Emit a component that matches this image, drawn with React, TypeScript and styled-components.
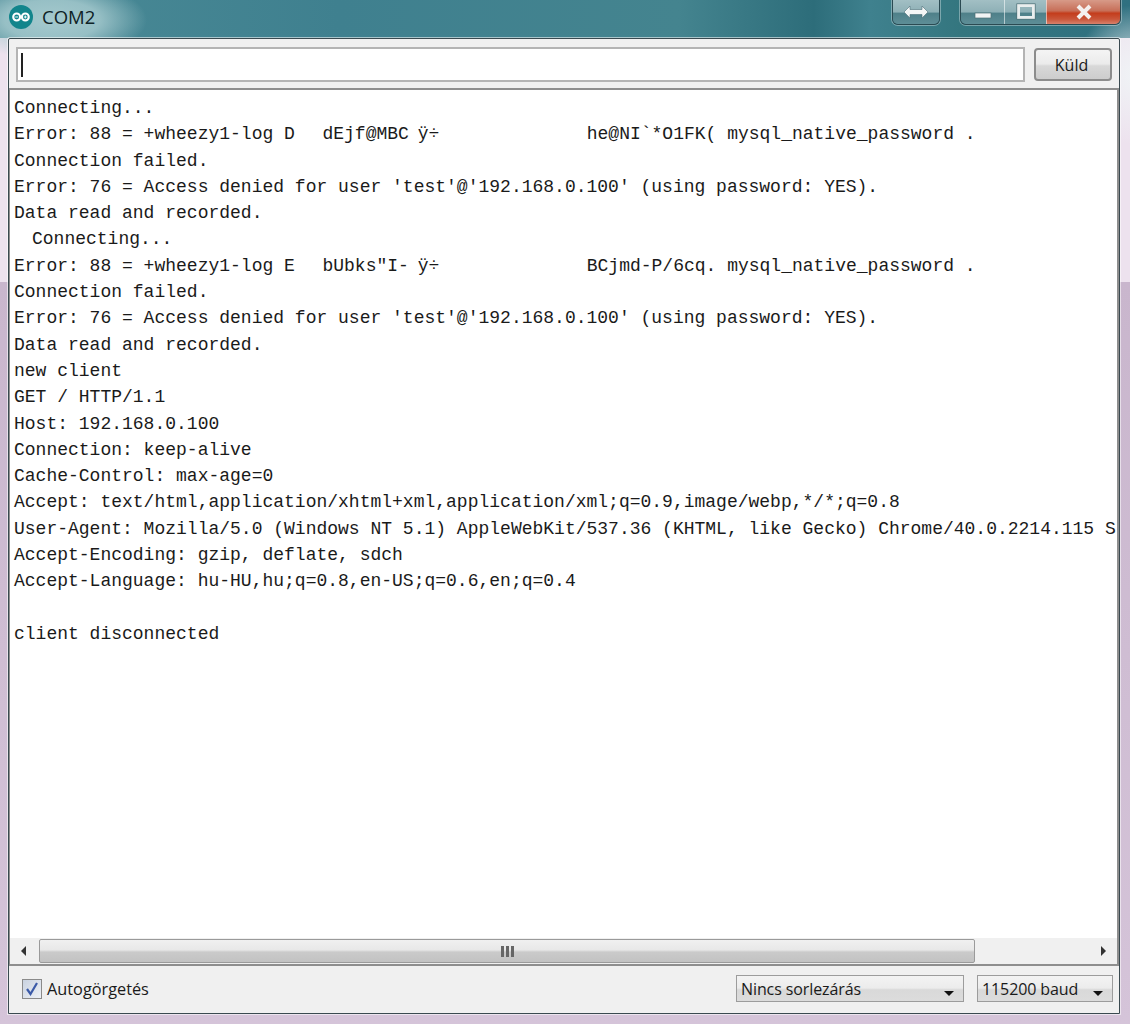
import React from "react";
import styled, { createGlobalStyle } from "styled-components";

const Global = createGlobalStyle`
  html, body { margin: 0; padding: 0; height: 100%; }
  body { width: 1130px; height: 1024px; overflow: hidden; }
  #root { width: 1130px; height: 1024px; }
`;

const Frame = styled.div`
  position: relative;
  width: 1130px;
  height: 1024px;
  box-sizing: border-box;
  display: flex;
  flex-direction: column;
  overflow: hidden;
  background:
    radial-gradient(ellipse 95px 40px at 52px 20px, rgba(170, 205, 209, 0.95) 0, rgba(170, 205, 209, 0.8) 50%, rgba(170, 205, 209, 0) 100%),
    radial-gradient(ellipse 60px 70px at 1135px 75px, rgba(240, 244, 246, 0.95), rgba(240, 244, 246, 0) 100%),
    linear-gradient(90deg, #4a8a96 0, #3f808f 30%, #44848f 60%, #2d6d7a 72%, #3f818e 77%, #34767f 85%, #2f7080 100%) top / 100% 38px no-repeat,
    linear-gradient(180deg, #ede2ee 0, #ede2ee 282px, #c9b6cd 282px, #d5c4d9 100%);
`;

const TitleBar = styled.div`
  height: 38px;
  flex: none;
  display: flex;
  align-items: flex-start;
  padding: 0 9px 0 9px;
  box-sizing: border-box;
`;

const TitleLogo = styled.svg`
  width: 24px;
  height: 24px;
  margin-top: 5px;
  flex: none;
`;

const TitleText = styled.span`
  margin: 6px 0 0 9px;
  font: 18.500px/22px "Open Sans", "Noto Sans", sans-serif;
  color: #0e2226;
`;

const Spacer = styled.div`
  flex: 1;
`;

const CaptionGroup = styled.div<{ $gap?: number }>`
  display: flex;
  height: 25px;
  box-sizing: border-box;
  border: 1px solid #2b4a52;
  border-top: 0;
  border-radius: 0 0 6px 6px;
  overflow: hidden;
  box-shadow: 0 0 0 1px rgba(255, 255, 255, 0.35);
  margin-left: ${(p) => p.$gap ?? 0}px;
`;

const CaptionButton = styled.div<{ $w: number; $close?: boolean }>`
  width: ${(p) => p.$w}px;
  display: flex;
  align-items: center;
  justify-content: center;
  border-left: 1px solid rgba(255, 255, 255, 0.55);
  background: ${(p) =>
    p.$close
      ? "linear-gradient(180deg, #d79a88 0, #c76f58 45%, #c43d1c 55%, #c9563a 80%, #d8816c 100%)"
      : "linear-gradient(180deg, #a2bfc4 0, #8eb0b6 50%, #4f8089 55%, #5e8e97 100%)"};
  &:first-child { border-left: 0; }
`;

const Client = styled.div`
  position: absolute;
  left: 8px;
  top: 38px;
  width: 1112px;
  height: 976px;
  box-sizing: border-box;
  border: 1px solid #3a4a50;
  border-radius: 2px 2px 0 0;
  background: #f0f0f0;
  display: flex;
  flex-direction: column;
  box-shadow: 0 0 0 1px rgba(255, 255, 255, 0.55);
`;

const SendRow = styled.div`
  flex: none;
  height: 49px;
  display: flex;
  align-items: flex-start;
  padding: 8px 7px 0 7px;
  box-sizing: border-box;
`;

const SendInput = styled.div`
  flex: 1;
  height: 35px;
  box-sizing: border-box;
  border: 2px solid #b4b4b4;
  background: #fff;
  display: flex;
  align-items: center;
  padding-left: 3px;
`;

const Caret = styled.div`
  width: 2px;
  height: 24px;
  background: #222;
`;

const SendButton = styled.div`
  width: 78px;
  height: 33px;
  margin: 1px 0 0 9px;
  box-sizing: border-box;
  border: 2px solid #8c8c8c;
  border-radius: 4px;
  background: linear-gradient(180deg, #f4f4f4 0, #ebebeb 48%, #d8d8d8 55%, #cdcdcd 100%);
  display: flex;
  align-items: center;
  justify-content: center;
  padding-right: 3px;
  font: 16px "Open Sans", "Noto Sans", sans-serif;
  color: #1a1a1a;
`;

const Output = styled.div`
  flex: 1;
  min-height: 0;
  display: flex;
  flex-direction: column;
  background: #fff;
  border-top: 2px solid #8e8e8e;
  border-left: 1px solid #8e8e8e;
  border-right: 2px solid #8e8e8e;
  overflow: hidden;
`;

const LogText = styled.pre`
  flex: 1;
  min-height: 0;
  margin: 0;
  padding: 5px 0 0 4px;
  overflow: hidden;
  white-space: pre;
  font-family: "Liberation Mono", monospace;
  font-size: 18px;
  line-height: 26.3px;
  color: #1a1a1a;
`;

const Shift = styled.span<{ $dx: number }>`
  margin-left: ${(p) => p.$dx}px;
`;

const Scrollbar = styled.div`
  flex: none;
  height: 26px;
  display: flex;
  align-items: center;
  background: #f0f0f0;
`;

const ArrowCell = styled.div`
  width: 26px;
  flex: none;
  display: flex;
  align-items: center;
  justify-content: center;
`;

const Track = styled.div`
  flex: 1;
  align-self: stretch;
  display: flex;
  padding: 0 116px 0 3px;
`;

const Thumb = styled.div`
  flex: 1;
  box-sizing: border-box;
  margin: 1px 0;
  border: 1px solid #9a9a9a;
  border-radius: 2px;
  background: linear-gradient(180deg, #f0f0f0 0, #e8e8e8 45%, #cacaca 55%, #c2c2c2 100%);
  display: flex;
  align-items: center;
  justify-content: center;
  gap: 2px;
`;

const Grip = styled.span`
  width: 3px;
  height: 11px;
  background: #666;
`;

const BottomBar = styled.div`
  flex: none;
  height: 49px;
  box-sizing: border-box;
  border-top: 2px solid #8e8e8e;
  display: flex;
  align-items: center;
  padding: 0 6px 2px 13px;
  font: 16px "Open Sans", "Noto Sans", sans-serif;
  color: #1a1a1a;
`;

const CheckBox = styled.div`
  width: 20px;
  height: 20px;
  box-sizing: border-box;
  border: 1px solid #8a8a8a;
  background: linear-gradient(135deg, #c9d2e0, #eef1f6);
  display: flex;
  align-items: center;
  justify-content: center;
`;

const CheckLabel = styled.span`
  margin-left: 5px;
  font-size: 16.300px;
`;

const Combo = styled.div<{ $w: number; $gap?: number }>`
  width: ${(p) => p.$w}px;
  height: 27px;
  margin-left: ${(p) => p.$gap ?? 0}px;
  box-sizing: border-box;
  border: 1px solid #9c9c9c;
  background: linear-gradient(180deg, #f3f3f3 0, #ececec 48%, #d9d9d9 55%, #dcdcdc 100%);
  display: flex;
  align-items: center;
  padding: 0 9px 0 4px;
`;

const ComboText = styled.span`
  flex: 1;
  white-space: nowrap;
  letter-spacing: -0.1px;
`;

const ComboArrow = styled.span`
  width: 0;
  height: 0;
  margin-top: 9px;
  border-left: 5px solid transparent;
  border-right: 5px solid transparent;
  border-top: 5px solid #111;
`;

export default function App() {
  return (
    <Frame>
      <Global />
      <TitleBar>
        <TitleLogo viewBox="0 0 25 25">
          <circle cx="12.5" cy="12.5" r="12.500" fill="#12858c" />
          <circle cx="8" cy="12.5" r="3.6" fill="none" stroke="#fff" strokeWidth="2.200" />
          <circle cx="17" cy="12.5" r="3.6" fill="none" stroke="#fff" strokeWidth="2.200" />
          <path d="M6.5 12.5h3M15.5 12.5h3M17 11v3" stroke="#fff" strokeWidth="1" />
        </TitleLogo>
        <TitleText>COM2</TitleText>
        <Spacer />
        <CaptionGroup>
          <CaptionButton $w={46}>
            <svg width="26" height="14" viewBox="0 0 26 14">
              <path d="M1 7l6-6v3.5h12V1l6 6-6 6V9.500H7V13z" fill="#f4f6f6" stroke="#4d7178" strokeWidth="0.6" />
            </svg>
          </CaptionButton>
        </CaptionGroup>
        <CaptionGroup $gap={20}>
          <CaptionButton $w={43}>
            <svg width="20" height="18" viewBox="0 0 20 18">
              <rect x="2" y="10" width="16" height="5" fill="#f2f4f4" stroke="#4d6f76" strokeWidth="0.7" />
            </svg>
          </CaptionButton>
          <CaptionButton $w={41}>
            <svg width="20" height="18" viewBox="0 0 20 18">
              <rect x="2.5" y="2.500" width="15" height="12" fill="none" stroke="#e9eeee" strokeWidth="3" />
              <rect x="0.8" y="0.800" width="18.400" height="15.400" fill="none" stroke="#4d6f76" strokeWidth="0.7" />
            </svg>
          </CaptionButton>
          <CaptionButton $w={73} $close>
            <svg width="18" height="16" viewBox="0 0 18 16">
              <path d="M3 2l12 12M15 2L3 14" stroke="#f4f0ee" strokeWidth="4" />
            </svg>
          </CaptionButton>
        </CaptionGroup>
      </TitleBar>
      <Client>
        <SendRow>
          <SendInput>
            <Caret />
          </SendInput>
          <SendButton>Küld</SendButton>
        </SendRow>
        <Output>
          <LogText>
            {"Connecting...\nError: 88 = +wheezy1-log D  "}
            <Shift $dx={6}>dEjf@MBC</Shift>{" "}
            <Shift $dx={-2}>ÿ÷</Shift>{"             "}
            <Shift $dx={7}>{"he@NI`*O1FK( mysql_native_password ."}</Shift>
            {"\nConnection failed.\nError: 76 = Access denied for user 'test'@'192.168.0.100' (using password: YES).\nData read and recorded.\n"}
            <Shift $dx={18}>Connecting...</Shift>
            {"\nError: 88 = +wheezy1-log E  "}
            <Shift $dx={6}>{'bUbks"I-'}</Shift>{" "}
            <Shift $dx={-2}>ÿ÷</Shift>{"             "}
            <Shift $dx={7}>BCjmd-P/6cq. mysql_native_password .</Shift>
            {`
Connection failed.
Error: 76 = Access denied for user 'test'@'192.168.0.100' (using password: YES).
Data read and recorded.
new client
GET / HTTP/1.1
Host: 192.168.0.100
Connection: keep-alive
Cache-Control: max-age=0
Accept: text/html,application/xhtml+xml,application/xml;q=0.9,image/webp,*/*;q=0.8
User-Agent: Mozilla/5.0 (Windows NT 5.1) AppleWebKit/537.36 (KHTML, like Gecko) Chrome/40.0.2214.115 S
Accept-Encoding: gzip, deflate, sdch
Accept-Language: hu-HU,hu;q=0.8,en-US;q=0.6,en;q=0.4

client disconnected`}
          </LogText>
          <Scrollbar>
            <ArrowCell>
              <svg width="8" height="12" viewBox="0 0 8 12"><path d="M7 1v10L2 6z" fill="#333" /></svg>
            </ArrowCell>
            <Track>
              <Thumb><Grip /><Grip /><Grip /></Thumb>
            </Track>
            <ArrowCell>
              <svg width="8" height="12" viewBox="0 0 8 12"><path d="M1 1v10l5-5z" fill="#333" /></svg>
            </ArrowCell>
          </Scrollbar>
        </Output>
        <BottomBar>
          <CheckBox>
            <svg width="14" height="14" viewBox="0 0 14 14">
              <path d="M2 7l3.500 5L12 1" fill="none" stroke="#3b5aa8" strokeWidth="2.200" />
            </svg>
          </CheckBox>
          <CheckLabel>Autogörgetés</CheckLabel>
          <Spacer />
          <Combo $w={228}>
            <ComboText>Nincs sorlezárás</ComboText>
            <ComboArrow />
          </Combo>
          <Combo $w={136} $gap={13}>
            <ComboText>115200 baud</ComboText>
            <ComboArrow />
          </Combo>
        </BottomBar>
      </Client>
    </Frame>
  );
}
